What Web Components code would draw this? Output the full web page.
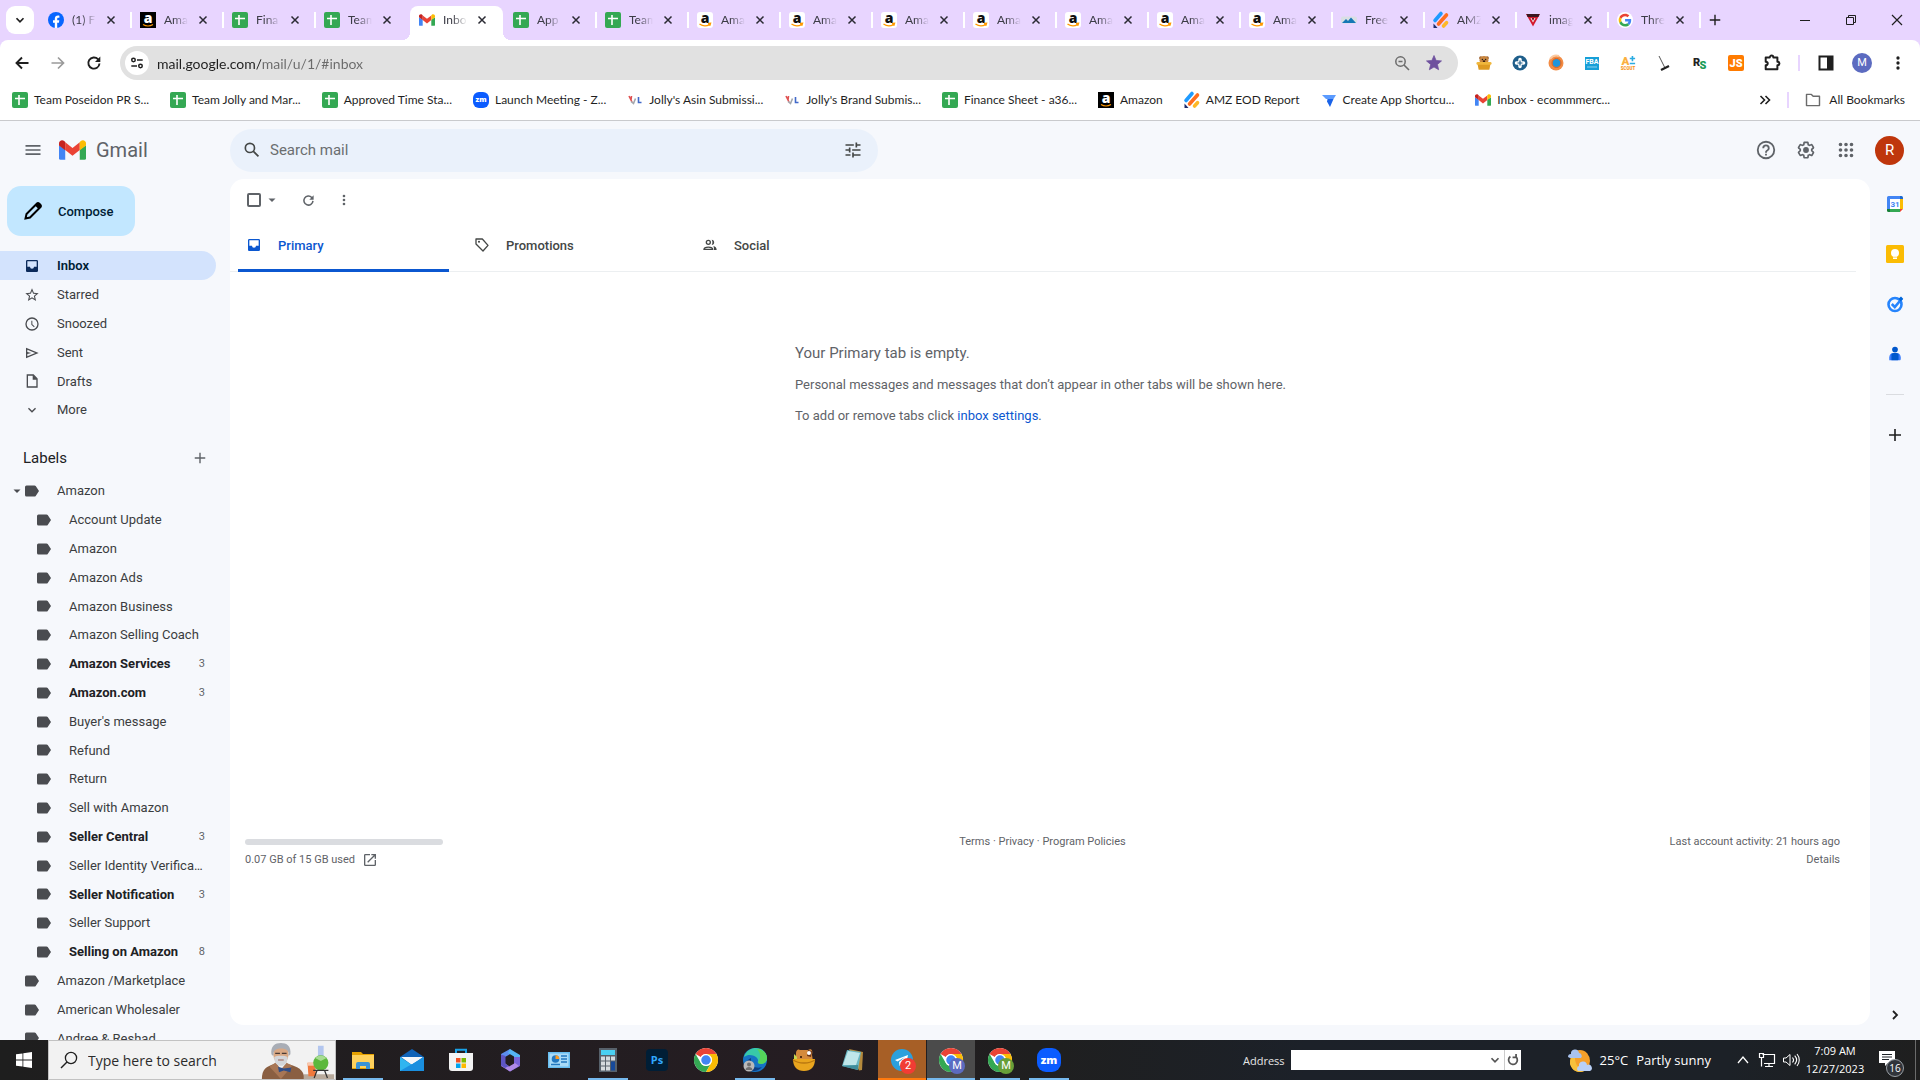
<!DOCTYPE html>
<html lang="en">
<head>
<meta charset="utf-8">
<title>Inbox - Gmail</title>
<style>
  html, body {
    margin: 0;
    height: 100%;
  }
  body {
    display: flex;
    flex-direction: column;
    overflow: hidden;
    background: #f6f8fc;
    font-family: Roboto, "Liberation Sans", sans-serif;
    font-size: 13px;
  }
</style>
</head>
<body>
<browser-tabs></browser-tabs>
<browser-toolbar></browser-toolbar>
<bookmarks-bar></bookmarks-bar>
<mail-app></mail-app>
<desktop-taskbar></desktop-taskbar>

<script>
// Icon artwork: name -> [viewBox, markup]
const SHEETS = '<rect width="16" height="16" rx="2" fill="#34a853"/><path d="M7 3v10M3 6.5h10" stroke="#fff" stroke-width="1.6"/>';
const GMAIL = '<path fill="#4285f4" d="M0 5v12.500a1.500 1.500 0 0 0 1.500 1.500H6V9z"/><path fill="#34a853" d="M26 5v12.500a1.500 1.500 0 0 1-1.500 1.500H20V9z"/><path fill="#ea4335" d="M6 2l7 5.500L20 2v7.500l-7 5.500-7-5.500z"/><path fill="#c5221f" d="M0 3c0-2.500 3-4 5-2.200L6 1.700v8L0 5.200z"/><path fill="#fbbc04" d="M26 3c0-2.500-3-4-5-2.200l-1 .9v8l6-4.500z"/>';
const SMILE = '<text x="8" y="11" text-anchor="middle" font-family="Open Sans, sans-serif" font-weight="800" font-size="14" fill="#111">a</text><path d="M2.500 12q5 3.500 10 .6M11 11.500l2.500-.2-.8 2.400" fill="none" stroke="#f90" stroke-width="1.400"/>';
const CHROME = '<circle cx="24" cy="24" r="24" fill="#fff"/><path fill="#ea4335" d="M24 0a24 24 0 0 1 20.800 12H24a12 12 0 0 0-10.400 6L3.200 12A24 24 0 0 1 24 0z"/><path fill="#34a853" d="M3.200 12A24 24 0 0 0 24 48l10.400-18A12 12 0 0 1 13.600 30z"/><path fill="#fbbc04" d="M44.800 12A24 24 0 0 1 24 48l10.400-18A12 12 0 0 0 34.400 18L24 12z"/><circle cx="24" cy="24" r="12" fill="#fff"/><circle cx="24" cy="24" r="9.500" fill="#4285f4"/>';
const AMZ = '<path d="M2 8.500L8 1.500" stroke="#1f9bff" stroke-width="3.600" stroke-linecap="round"/><path d="M5.500 12L13.500 3" stroke="#ff6d1f" stroke-width="3.600" stroke-linecap="round"/><path d="M10.500 14L13.500 10.700" stroke="#fdb827" stroke-width="3.600" stroke-linecap="round"/><path d="M.5 11.500L4.500 16H.5z" fill="#1b2a6b"/>';
const JOLLY = '<path d="M2 4l3 6M4.500 4L4 8" stroke="#e05252" stroke-width="1.600"/><path d="M4 9.500l2.500 2L8.500 6.500" fill="none" stroke="#a3a7ad" stroke-width="1.600"/><path d="M11.500 5v5.500h3" fill="none" stroke="#4169c9" stroke-width="1.600"/>';

const ICONS = {
  chevronDown: ['0 0 16 16', '<path d="M4 6l4 4 4-4" fill="none" stroke="currentColor" stroke-width="2"/>'],
  close: ['0 0 16 16', '<path d="M4 4l8 8M12 4l-8 8" stroke="currentColor" stroke-width="1.700"/>'],
  plus: ['0 0 16 16', '<path d="M8 2v12M2 8h12" stroke="currentColor" stroke-width="1.600"/>'],
  back: ['0 0 16 16', '<path d="M14.500 8H2.500M8 2.500L2.500 8 8 13.500" fill="none" stroke="currentColor" stroke-width="1.900"/>'],
  forward: ['0 0 16 16', '<path d="M1.500 8h12M8 2.500L13.500 8 8 13.500" fill="none" stroke="currentColor" stroke-width="1.700"/>'],
  reload: ['0 0 16 16', '<path d="M13.500 8.500A5.600 5.600 0 1 1 12 4.200l1 1" fill="none" stroke="currentColor" stroke-width="1.900"/><path d="M14.300 1.500V7H9z" fill="currentColor"/>'],
  minimize: ['0 0 12 12', '<path d="M1 6.500h10" stroke="currentColor"/>'],
  restore: ['0 0 12 12', '<path d="M1.500 3.500h7v7h-7zM3.500 3.500v-2h7v7h-2" fill="none" stroke="currentColor"/>'],
  winClose: ['0 0 12 12', '<path d="M1 1l10 10M11 1L1 11" stroke="currentColor" stroke-width="1.200"/>'],
  tuneSite: ['0 0 16 16', '<circle cx="4" cy="4.500" r="2" fill="none" stroke="currentColor" stroke-width="1.700"/><circle cx="12" cy="11.500" r="2" fill="none" stroke="currentColor" stroke-width="1.700"/><path d="M8 4.500h6.500M1.500 11.500H8" stroke="currentColor" stroke-width="1.800"/>'],
  zoomOut: ['0 0 16 16', '<circle cx="6.500" cy="6.500" r="4.700" fill="none" stroke="currentColor" stroke-width="1.500"/><path d="M10 10l5 5M4.500 6.500h4" stroke="currentColor" stroke-width="1.600"/>'],
  star: ['0 0 24 24', '<path d="M12 17.300l6.200 3.700-1.600-7L22 9.200l-7.200-.6L12 2 9.200 8.600 2 9.200l5.500 4.800L5.800 21z" fill="currentColor" stroke="currentColor"/>'],
  starOutline: ['0 0 24 24', '<path d="M22 9.240l-7.190-.62L12 2 9.190 8.630 2 9.240l5.460 4.730L5.820 21 12 17.270 18.180 21l-1.630-7.030L22 9.240zM12 15.400l-3.760 2.270 1-4.280-3.320-2.880 4.380-.38L12 6.100l1.710 4.040 4.380.38-3.320 2.880 1 4.280L12 15.400z" fill="currentColor"/>'],
  kebab: ['0 0 24 24', '<path d="M12 8a2 2 0 1 0 0-4 2 2 0 0 0 0 4zm0 2a2 2 0 1 0 0 4 2 2 0 0 0 0-4zm0 6a2 2 0 1 0 0 4 2 2 0 0 0 0-4z" fill="currentColor"/>'],
  puzzle: ['0 0 20 20', '<path d="M3 4h4.500c0-3 4-3 4 0H16v4.500c3 0 3 4 0 4V17H3v-4.500c3 0 3-4 0-4z" fill="none" stroke="currentColor" stroke-width="2.200" stroke-linejoin="round"/>'],
  panel: ['0 0 16 16', '<rect x="1.500" y="1.500" width="13" height="13" fill="none" stroke="currentColor" stroke-width="2"/><path d="M9 1h6v14H9z" fill="currentColor"/>'],
  more: ['0 0 12 12', '<path d="M1.500 2l4 4-4 4M6.500 2l4 4-4 4" fill="none" stroke="currentColor" stroke-width="1.600"/>'],
  folder: ['0 0 18 18', '<path d="M1.700 15.300V2.700h5.500l2 2h7.100v10.600z" fill="none" stroke="currentColor" stroke-width="1.600" stroke-linejoin="round"/>'],

  facebook: ['0 0 16 16', '<circle cx="8" cy="8" r="8" fill="#0866ff"/><path d="M6.800 16v-5.300H5V8.200h1.800V7c0-2.400 1.200-3.500 3.300-3.500.5 0 1 .1 1.300.2v2.100h-.9c-1 0-1.300.4-1.300 1.300v1.100h2.100l-.4 2.500H9.200V16z" fill="#fff"/>'],
  amazonDark: ['0 0 16 16', '<rect width="16" height="16" fill="#000"/><text x="8" y="10.500" text-anchor="middle" font-family="Open Sans, sans-serif" font-weight="800" font-size="14" fill="#fff">a</text><path d="M3 12.500q5 3 10 0" fill="none" stroke="#f90" stroke-width="1.200"/>'],
  amazon: ['0 0 16 16', '<rect width="16" height="16" rx="3" fill="#fff"/>' + SMILE],
  sheets: ['0 0 16 16', SHEETS],
  gmail: ['0 0 26 19', GMAIL],
  mountain: ['0 0 16 16', '<rect y="4.500" width="16" height="7" rx="2" fill="#d9dfe4"/><path d="M1 11l4-4 2 2 3-3.500 5 5.500z" fill="#1577b5"/>'],
  amz: ['0 0 16 16', AMZ],
  vee: ['0 0 16 16', '<path d="M1 2h14L8 14.500z" fill="#d3182c"/><path d="M1.500 2h13l-1 3h-11z" fill="#3a1720"/><path d="M5.500 6h5L8 10.500z" fill="#fff"/><path d="M6.500 6h3L8 9z" fill="#7d1220"/>'],
  google: ['0 0 48 48', '<circle cx="24" cy="24" r="24" fill="#fff"/><g transform="translate(5 5) scale(.8)"><path fill="#EA4335" d="M24 9.500c3.540 0 6.710 1.220 9.210 3.600l6.850-6.850C35.900 2.380 30.470 0 24 0 14.620 0 6.510 5.380 2.560 13.220l7.980 6.190C12.430 13.720 17.740 9.500 24 9.500z"/><path fill="#4285F4" d="M46.980 24.550c0-1.570-.15-3.090-.38-4.550H24v9.020h12.940c-.58 2.960-2.260 5.480-4.780 7.180l7.730 6c4.510-4.180 7.090-10.360 7.090-17.650z"/><path fill="#FBBC05" d="M10.530 28.590c-.48-1.450-.76-2.990-.76-4.590s.27-3.140.76-4.590l-7.980-6.190C.92 16.460 0 20.120 0 24c0 3.880.92 7.540 2.560 10.780l7.970-6.190z"/><path fill="#34A853" d="M24 48c6.480 0 11.930-2.130 15.890-5.810l-7.730-6c-2.150 1.450-4.920 2.300-8.160 2.300-6.260 0-11.570-4.220-13.470-9.910l-7.980 6.190C6.510 42.620 14.620 48 24 48z"/></g>'],
  zoom: ['0 0 24 24', '<rect width="24" height="24" rx="9" fill="#0b5cff"/><text x="12" y="15.500" text-anchor="middle" font-family="Open Sans, sans-serif" font-weight="800" font-size="11" fill="#fff">zm</text>'],
  jolly: ['0 0 16 16', JOLLY],
  shortcut: ['0 0 16 16', '<path d="M1 3h14l-2.500 4H5z" fill="#5b9bff"/><path d="M6.500 7h6L9 15 6 9.500z" fill="#1a63e8"/>'],

  extBear: ['0 0 18 18', '<circle cx="5.500" cy="3.500" r="2" fill="#9a5b26"/><circle cx="12.500" cy="3.500" r="2" fill="#9a5b26"/><circle cx="9" cy="6" r="5" fill="#c88640"/><circle cx="7.200" cy="5" r=".8" fill="#222"/><circle cx="10.800" cy="5" r=".8" fill="#222"/><ellipse cx="9" cy="7" rx="1.400" ry="1" fill="#3a220f"/><path d="M1.500 9h15l-1.500 7.500H3z" fill="#dd9a22"/><rect x="0.500" y="8" width="17" height="3" rx="1.500" fill="#f0b73c"/>'],
  extHelp: ['0 0 16 16', '<circle cx="8" cy="8" r="7.500" fill="#1f5f8b"/><path d="M8 4.500v7M4.500 8h7" stroke="#fff" stroke-width="3.500" stroke-linecap="round"/><path d="M8 5.500v5M5.500 8h5" stroke="#1f5f8b" stroke-width="1.200"/>'],
  extSwirl: ['0 0 16 16', '<circle cx="8" cy="8" r="7.500" fill="#f28c45"/><path d="M2 4a8 8 0 0 1 9-3" stroke="#fbc9a0" stroke-width="2" fill="none"/><circle cx="8.500" cy="8" r="4" fill="#1e95dc"/><circle cx="8.500" cy="8" r="4.500" fill="none" stroke="#d96220"/>'],
  extFba: ['0 0 16 16', '<rect x="1" y="2" width="14" height="13" fill="#169fd8"/><text x="8" y="9" text-anchor="middle" font-family="Roboto" font-weight="700" font-size="7" fill="#fff">FBA</text><path d="M3 12h10" stroke="#8bd2ef"/>'],
  extScout: ['0 0 18 18', '<text x="6" y="11" text-anchor="middle" font-family="Roboto" font-weight="900" font-size="13" fill="#fbb040">A</text><path d="M14 1v6M11 4h6M11 9.500h6" stroke="#29abe2" stroke-width="1.800"/><text x="9" y="17" text-anchor="middle" font-family="Roboto" font-weight="900" font-size="5" fill="#f7941d">SCOUT</text>'],
  extBroom: ['0 0 16 16', '<path d="M3 1l6 12" stroke="#555"/><path d="M5 15l8-4" stroke="#222" stroke-width="2.200"/>'],
  extRs: ['0 0 16 16', '<text x="1" y="11" font-family="Roboto" font-weight="900" font-size="11" fill="#222">R</text><text x="7.500" y="13.500" font-family="Roboto" font-weight="900" font-size="11" fill="#159a55">S</text>'],
  extJs: ['0 0 16 16', '<rect width="16" height="16" rx="2" fill="#ff7b00"/><text x="8" y="12.200" text-anchor="middle" font-family="Roboto" font-weight="900" font-size="11" fill="#fff">JS</text>'],

  menu: ['0 0 24 24', '<path d="M3 18h18v-2H3v2zm0-5h18v-2H3v2zm0-7v2h18V6H3z" fill="currentColor"/>'],
  search: ['0 0 24 24', '<path d="M20.490 19l-5.730-5.730C15.530 12.200 16 10.910 16 9.500A6.500 6.500 0 1 0 9.500 16c1.410 0 2.700-.47 3.770-1.240L19 20.490 20.490 19zM5 9.500a4.500 4.500 0 1 1 9 0 4.500 4.500 0 0 1-9 0z" fill="currentColor"/>'],
  tune: ['0 0 24 24', '<path d="M3 17v2h6v-2H3zM3 5v2h10V5H3zm10 16v-2h8v-2h-8v-2h-2v6h2zM7 9v2H3v2h4v2h2V9H7zm14 4v-2H11v2h10zm-6-4h2V7h4V5h-4V3h-2v6z" fill="currentColor"/>'],
  help: ['0 0 24 24', '<path d="M11 18h2v-2h-2v2zm1-16a10 10 0 1 0 0 20 10 10 0 0 0 0-20zm0 18a8 8 0 1 1 0-16 8 8 0 0 1 0 16zm0-14a4 4 0 0 0-4 4h2a2 2 0 1 1 4 0c0 2-3 1.750-3 5h2c0-2.250 3-2.500 3-5a4 4 0 0 0-4-4z" fill="currentColor"/>'],
  gear: ['0 0 24 24', '<path d="M13.850 22.250h-3.700c-.74 0-1.360-.54-1.450-1.270l-.27-1.890c-.27-.14-.53-.29-.79-.46l-1.800.72c-.7.260-1.470-.03-1.810-.65L2.200 15.530c-.35-.66-.2-1.440.36-1.880l1.530-1.190c-.01-.15-.02-.3-.02-.46 0-.15.01-.31.02-.46l-1.520-1.190c-.59-.45-.74-1.260-.37-1.880l1.850-3.190c.34-.62 1.110-.9 1.790-.63l1.810.73c.26-.17.52-.32.78-.46l.27-1.910c.09-.7.710-1.250 1.440-1.250h3.700c.74 0 1.360.54 1.450 1.270l.27 1.890c.27.14.53.29.79.46l1.800-.72c.71-.26 1.480.03 1.820.65l1.840 3.180c.36.66.2 1.440-.36 1.880l-1.520 1.190c.01.150.02.300.02.460s-.01.310-.02.460l1.520 1.190c.56.450.72 1.230.37 1.860l-1.860 3.220c-.34.620-1.110.9-1.800.63l-1.800-.72c-.26.170-.52.320-.78.460l-.27 1.910c-.1.680-.72 1.220-1.460 1.220zm-3.230-2h2.760l.37-2.550.53-.22c.44-.18.88-.44 1.340-.78l.45-.34 2.380.96 1.380-2.400-2.030-1.580.07-.56c.03-.26.06-.51.06-.78s-.03-.53-.06-.78l-.07-.56 2.030-1.580-1.390-2.400-2.390.96-.45-.35c-.42-.32-.87-.58-1.330-.77l-.52-.22-.37-2.550h-2.760l-.37 2.550-.53.210c-.44.190-.88.440-1.340.790l-.45.330-2.380-.95-1.390 2.390 2.030 1.580-.07.560a7 7 0 0 0-.06.790c0 .26.020.53.060.78l.07.56-2.030 1.580 1.380 2.400 2.390-.96.45.350c.43.330.86.580 1.330.77l.53.220.38 2.550z" fill="currentColor"/><circle cx="12" cy="12" r="3.500" fill="currentColor"/>'],
  apps: ['0 0 24 24', '<path d="M6 8a2 2 0 1 0 0-4 2 2 0 0 0 0 4zm6 12a2 2 0 1 0 0-4 2 2 0 0 0 0 4zm-6 0a2 2 0 1 0 0-4 2 2 0 0 0 0 4zm0-6a2 2 0 1 0 0-4 2 2 0 0 0 0 4zm6 0a2 2 0 1 0 0-4 2 2 0 0 0 0 4zm4-8a2 2 0 1 0 4 0 2 2 0 0 0-4 0zm-4 2a2 2 0 1 0 0-4 2 2 0 0 0 0 4zm6 6a2 2 0 1 0 0-4 2 2 0 0 0 0 4zm0 6a2 2 0 1 0 0-4 2 2 0 0 0 0 4z" fill="currentColor"/>'],
  pencil: ['0 0 18 18', '<path d="M1.500 16.500l1-4.500L13 1.500a1.400 1.400 0 0 1 2 0l1.500 1.500a1.400 1.400 0 0 1 0 2L6 15.500z" fill="none" stroke="#000" stroke-width="2"/><path d="M11 3.500L13.500 1h2L17 2.500v2L14.500 7z" fill="#000"/><path d="M1 17v-3l3 3z" fill="#000"/>'],
  inbox: ['0 0 24 24', '<path d="M19 3H5a2 2 0 0 0-2 2v14c0 1.100.9 2 2 2h14a2 2 0 0 0 2-2V5a2 2 0 0 0-2-2zm0 10h-4a3 3 0 0 1-6 0H5V5h14v8z" fill="currentColor"/>'],
  clock: ['0 0 24 24', '<path d="M12 2a10 10 0 1 0 0 20 10 10 0 0 0 0-20zm0 18a8 8 0 1 1 0-16 8 8 0 0 1 0 16zm.5-13H11v6l4 4 1-1.200-3.500-3.500z" fill="currentColor"/>'],
  send: ['0 0 24 24', '<path d="M3 20V4l19 8-19 8zm2-3l11.850-5L5 7v3.500l6 1.500-6 1.500V17z" fill="currentColor"/>'],
  draft: ['0 0 24 24', '<path d="M5 3h9l5.500 5.500V21H5z" fill="none" stroke="currentColor" stroke-width="2"/><path d="M13 2.500V10h7z" fill="currentColor"/>'],
  expand: ['0 0 24 24', '<path d="M7.400 8.600L12 13.200l4.600-4.600L18 10l-6 6-6-6z" fill="currentColor"/>'],
  label: ['0 0 16 16', '<path d="M2.500 2.500h8a1.500 1.500 0 0 1 1.200.6L15 8l-3.300 4.900a1.500 1.500 0 0 1-1.200.6h-8A1.500 1.500 0 0 1 1 12V4a1.500 1.500 0 0 1 1.500-1.500z" fill="currentColor"/>'],
  caret: ['0 0 8 8', '<path d="M.5 2.500h7L4 6z" fill="currentColor"/>'],
  tag: ['0 0 24 24', '<path d="M3 3h9.500l8.500 9.500-7.500 8.500L3 10.500z" fill="none" stroke="currentColor" stroke-width="2" stroke-linejoin="round"/><circle cx="7.500" cy="7.200" r="1.600" fill="currentColor"/>'],
  people: ['0 0 24 24', '<circle cx="9.500" cy="8" r="3" fill="none" stroke="currentColor" stroke-width="2"/><path d="M3 18.500c0-4.500 13-4.500 13 0z" fill="none" stroke="currentColor" stroke-width="2"/><path d="M14.500 4c5 0 5 8 0 8 1.500-2.500 1.500-5.500 0-8zM17 13.500c3 .8 5 2.500 5 6h-4c0-3-.2-4.500-1-6z" fill="currentColor"/>'],
  openNew: ['0 0 24 24', '<path d="M19 19H5V5h7V3H5a2 2 0 0 0-2 2v14a2 2 0 0 0 2 2h14a2 2 0 0 0 2-2v-7h-2v7zM14 3v2h3.600l-9.800 9.800 1.400 1.400L19 6.400V10h2V3h-7z" fill="currentColor"/>'],
  calendar: ['0 0 18 18', '<rect x="1" y="1" width="16" height="16" rx="1.500" fill="#fff"/><path d="M1 14V2.500A1.500 1.500 0 0 1 2.500 1H14v3H4v10z" fill="#4285f4"/><path d="M14 1h1.500A1.500 1.500 0 0 1 17 2.500V4h-3z" fill="#1967d2"/><path d="M14 4h3v10h-3z" fill="#fbbc04"/><path d="M4 14h10v3H4z" fill="#34a853"/><path d="M1 14h3v3H2.500A1.500 1.500 0 0 1 1 15.500z" fill="#188038"/><path d="M14 14h3l-3 3z" fill="#ea4335"/><text x="9" y="12" text-anchor="middle" font-family="Roboto" font-weight="700" font-size="8" fill="#4285f4">31</text>'],
  keep: ['0 0 18 18', '<rect width="18" height="18" rx="1.500" fill="#fbbc04"/><circle cx="9" cy="8" r="4" fill="#fff"/><path d="M7 10.500h4V14H7z" fill="#fff"/><path d="M7 12.200h4" stroke="#fbbc04" stroke-width=".6"/>'],
  tasks: ['0 0 18 18', '<circle cx="9" cy="9.500" r="6.500" fill="none" stroke="#2684fc" stroke-width="2.600"/><path d="M5.800 9l3 3L16 3.500" fill="none" stroke="#2684fc" stroke-width="2.600"/><path d="M12.500 3.800L15 1.500l2.200 2.300-2.500 2.700z" fill="#0066da"/>'],
  contacts: ['0 0 18 18', '<circle cx="9" cy="4" r="3.200" fill="#0057cc"/><path d="M2.500 16v-3c0-3 2-5 4.500-5h4c2.500 0 4.500 2 4.500 5v1.500c0 1-.6 1.500-1.500 1.500z" fill="#3c7dfc"/><path d="M5 16V9c1-.8 2-1 4-1s3 .2 4 1v6c0 .6-.4 1-1 1z" fill="#0057cc"/>'],
  chevronRight: ['0 0 16 16', '<path d="M6 4l4 4-4 4" fill="none" stroke="currentColor" stroke-width="1.800"/>'],

  windows: ['0 0 16 16', '<path d="M0 2.300L6.500 1.400v6.200H0zM7.300 1.300L16 0v7.600H7.300zM0 8.400h6.500v6.200L0 13.700zM7.300 8.400H16V16l-8.700-1.300z" fill="#fff"/>'],
  lens: ['0 0 18 18', '<circle cx="11" cy="7" r="5.600" fill="none" stroke="currentColor" stroke-width="1.300"/><path d="M7 11l-6 6" stroke="currentColor" stroke-width="1.400"/>'],
  scientist: ['0 0 76 40', '<path d="M0 40c0-10 4-13 14-16h12c12 3 18 6 19 16z" fill="#8a5f42"/><path d="M8 27l12 13 12-14-6-3H14z" fill="#a87655"/><path d="M15 23l5 7 6-7z" fill="#eef0f4"/><path d="M17 27l6 2 8-1-1 5-7-2-5 2z" fill="#2f4d88"/><ellipse cx="20" cy="14" rx="8" ry="11" fill="#d9a884"/><path d="M10 14C9 5 14 2 20 2s11 3 10 12l-2 2c1-6-2-8-8-8s-8 2-8 8z" fill="#a9adb5"/><path d="M13 17c2-2 12-2 14 0 0 6-3 9-7 9s-7-3-7-9z" fill="#d4d6da"/><path d="M17 20h6" stroke="#9b5a4a"/><path d="M14 13h5M21 13h5" stroke="#4a3b35" stroke-width="1.500"/><path d="M44 35h32v5H44z" fill="#b8aa9c"/><path d="M48 23h8l1 14h-8z" fill="#f0783c"/><path d="M48 23h8v3h-8z" fill="#f7c9b0"/><path d="M59 5h6v12h-6z" fill="#b3c6ee"/><circle cx="62" cy="23" r="8" fill="#5cb83c"/><path d="M56 18a8 8 0 0 1 12 0l-6 3z" fill="#a8dc92"/><path d="M54 31h16M58 31l-3 8M66 31l3 8" stroke="#333" stroke-width="1.300"/>'],
  explorer: ['0 0 24 24', '<path d="M1 4h9l2 2h11v15H1z" fill="#e6a100"/><path d="M1 7h22v13H1z" fill="#ffd15c"/><path d="M5 21v-5a2 2 0 0 1 2-2h10a2 2 0 0 1 2 2v5h-4v-3H9v3z" fill="#3a93d6"/>'],
  mail: ['0 0 24 24', '<path d="M0 9L12 1l12 8v14H0z" fill="#0f63b8"/><path d="M1 9h22L12 17z" fill="#f4f7fa"/><path d="M0 9l12 8L24 9v14H0z" fill="#2fb5f0"/><path d="M0 23L24 9v14z" fill="#1a8fdf"/><path d="M3 9h18l-9 7z" fill="#f4f7fa"/>'],
  store: ['0 0 24 24', '<path d="M7 6V1.700h10V6" fill="none" stroke="#1aa2e8" stroke-width="2"/><path d="M0 5h24v15a3 3 0 0 1-3 3H3a3 3 0 0 1-3-3z" fill="#f3f3f3"/><path fill="#f25022" d="M7 10h4.500v4.500H7z"/><path fill="#7fba00" d="M12.500 10H17v4.500h-4.500z"/><path fill="#00a4ef" d="M7 15.500h4.500V20H7z"/><path fill="#ffb900" d="M12.500 15.500H17V20h-4.500z"/>'],
  office: ['0 0 24 24', '<path d="M12 1L3 6v9l4 2.500V9l7-4z" fill="#5b8def"/><path d="M12 1l10 6v8l-6-2V8.500L10 5z" fill="#55b4f5"/><path d="M22 9v9l-10 5.500-3-2 7-4V9z" fill="#7a63d8"/><path d="M3 12v6l9 5.500L21 18l-4-3-6 3.500z" fill="#b08ae6"/><path d="M3 6.500v11l4 2.500 4-2-3.500-2V8z" fill="#5d55c4"/>'],
  control: ['0 0 24 24', '<rect x="1" y="4" width="22" height="16" fill="#67bdf0"/><rect x="2.500" y="5.500" width="19" height="13" fill="#a9dbf8"/><circle cx="8.500" cy="11" r="3.800" fill="#2278c0"/><path d="M8.500 11V7.200a3.800 3.800 0 0 1 3.800 3.800z" fill="#ff9a1f"/><path d="M14 8h6M14 11h6M14 14h6M4 16.500h9" stroke="#2278c0" stroke-width="1.500"/>'],
  calculator: ['0 0 24 24', '<rect x="3" width="18" height="24" fill="#57616b"/><rect x="5" y="2" width="14" height="5" fill="#4ad0f2"/><path d="M5 8.500h4v4H5zM10 8.500h4v4h-4zM15 8.500h4v4h-4zM5 13.500h4v4H5zM10 13.500h4v4h-4zM5 18.500h4v4H5zM10 18.500h4v4h-4z" fill="#d5dade"/><path d="M15 13.500h4v9h-4z" fill="#174a9b"/>'],
  photoshop: ['0 0 24 24', '<rect x="1" y="1" width="22" height="22" rx="4" fill="#001e36"/><text x="12" y="16" text-anchor="middle" font-family="Open Sans, sans-serif" font-weight="700" font-size="11" fill="#31a8ff">Ps</text>'],
  chrome: ['0 0 48 48', CHROME],
  edge: ['0 0 24 24', '<circle cx="12" cy="12" r="12" fill="#1673c4"/><path d="M1 9C3 2 9 0 13 0c7 0 11 5 11 10 0 4-3 6-6 6-2 0-4-1-3-3 1-4-8-9-14-4z" fill="#38c9a8"/><path d="M14 1c6 0 10 5 10 9 0 4-3 6-6 6-2 0-3-1-3-2 3-4 3-9-1-13z" fill="#55d65a"/><path d="M8 13c0 5 5 8 11 6-4 5-10 5-14 2-3-4-2-9 3-11z" fill="#0d3e82"/><circle cx="6" cy="18" r="5.500" fill="#b9b9b9"/><circle cx="6" cy="16.500" r="2" fill="#6f6f6f"/><path d="M2.500 22c0-4 7-4 7 0z" fill="#6f6f6f"/>'],
  capybara: ['0 0 24 24', '<path d="M4 6c0-5 3-5 4-4h8c4-2 5 1 4 5l1 6H3z" fill="#d48a3c"/><path d="M2 6l3 3v5H2z" fill="#c6d84e"/><path d="M16 2l4 1-1 6-4-1z" fill="#6b3518"/><circle cx="17" cy="5" r="2" fill="#fff"/><circle cx="9" cy="9" r="1" fill="#2b1708"/><path d="M1 11h22c0 8-4 12-11 12S1 19 1 11z" fill="#e9a51e"/><path d="M1 12c6 4 16 4 22 0" stroke="#b87710" fill="none" stroke-width="1.500"/>'],
  notepad: ['0 0 24 24', '<path d="M8 1l14 3-1 18-3 .5z" fill="#b58a3c"/><path d="M6 2l14 2-3 18L1 18z" fill="#69b7c4"/><path d="M7 3l12 2-4 12L2 17z" fill="#bfe6ea"/><path d="M1 18l16-1v5z" fill="#3f8d9c"/>'],
  telegram: ['0 0 24 24', '<circle cx="12" cy="12" r="11" fill="#2ba0dc"/><path d="M5 12l13-5-2.500 12-4-3-2 2-.5-4 6-5-7.500 4.500z" fill="#fff"/>'],
  weather: ['0 0 24 24', '<ellipse cx="12" cy="13" rx="10" ry="11" fill="#f5a02a"/><path d="M2 16a10 11 0 0 0 14 7c-6-2-10-8-9-17a11 11 0 0 0-5 10z" fill="#f7c13c"/><path d="M0 9a3 3 0 0 1 3-3 4 4 0 0 1 8-1 3 3 0 0 1 2 5H2z" fill="#a9c3ee"/><path d="M10 23a3 3 0 0 1 1-5 4 4 0 0 1 8-1 3 3 0 0 1 3 6z" fill="#b9d0f6"/>'],
  chevronUp: ['0 0 16 16', '<path d="M3 11l5-6 5 6" fill="none" stroke="currentColor" stroke-width="1.300"/>'],
  network: ['0 0 18 18', '<path d="M4.500 3.500h12v9H6M11 12.500v3M7 15.500h8" fill="none" stroke="currentColor" stroke-width="1.200"/><path d="M1.500 2.500h4v4h-4zM3.500 6.500v9" fill="none" stroke="currentColor" stroke-width="1.200"/>'],
  volume: ['0 0 18 18', '<path d="M1.500 7h2.500L8 3.500v11L4 11H1.500z" fill="none" stroke="currentColor"/><path d="M10.500 6.500c1.300 1.500 1.300 3.500 0 5M12.700 4.700c2.300 2.500 2.300 6 0 8.600M15 3c3 3.500 3 8.500 0 12" fill="none" stroke="currentColor" stroke-width="1.100"/>'],
  note: ['0 0 16 16', '<path d="M0 0h16v12H9l-3 3v-3H0z" fill="#fff"/><path d="M3 3.500h10M3 6h10M3 8.500h7" stroke="#1c2126"/>'],
  refreshSmall: ['0 0 16 16', '<path d="M11.500 4.500A5 5 0 1 1 5 4M11.500 1v4h-4" fill="none" stroke="currentColor" stroke-width="2"/>']
};

class UiIcon extends HTMLElement {
  connectedCallback() {
    const [box, art] = ICONS[this.getAttribute('name')];
    const size = this.getAttribute('size') || 16;
    const width = this.getAttribute('width') || size;
    this.attachShadow({ mode: 'open' });
    this.shadowRoot.innerHTML = `
      <style>
        :host { display: inline-flex; flex: none; }
        svg { display: block; overflow: visible; }
      </style>
      <svg viewBox="${box}" width="${width}" height="${size}" aria-hidden="true">${art}</svg>
    `;
  }
}
customElements.define('ui-icon', UiIcon);

// Shared reset for the controls inside each shadow root
const RESET = `
  :host, * { box-sizing: border-box; }
  button, input, select { font: inherit; color: inherit; margin: 0; }
  button {
    display: inline-flex;
    align-items: center;
    justify-content: center;
    padding: 0;
    border: 0;
    background: none;
  }
  a { color: inherit; text-decoration: none; }
`;

class BrowserTab extends HTMLElement {
  connectedCallback() {
    this.attachShadow({ mode: 'open' });
    this.shadowRoot.innerHTML = `
      <style>
        ${RESET}
        :host {
          flex: 1;
          display: flex;
          align-items: center;
          position: relative;
          min-width: 0;
          height: 28px;
          padding-left: 8px;
          font-size: 12px;
          color: #3c3c46;
        }
        .title {
          width: 24px;
          height: 16px;
          line-height: 16px;
          margin: 0 8px;
          overflow: hidden;
          white-space: nowrap;
          -webkit-mask-image: linear-gradient(90deg, #000 40%, transparent);
          mask-image: linear-gradient(90deg, #000 40%, transparent);
        }
        button { width: 14px; color: #2a2a33; }
        :host::after {
          content: "";
          position: absolute;
          right: 0;
          top: 6px;
          width: 2px;
          height: 16px;
          background: #fff;
        }
        :host([plain])::after { display: none; }
        :host([active]) {
          height: 34px;
          padding: 0 0 6px 9px;
          margin: 6px 2px 0;
          background: #fff;
          border-radius: 8px 8px 0 0;
        }
        :host([active])::before, :host([active])::after {
          content: "";
          display: block;
          position: absolute;
          top: auto;
          bottom: 0;
          width: 8px;
          height: 8px;
          background: radial-gradient(circle at 0 0, transparent 8px, #fff 8px);
        }
        :host([active])::before { left: -8px; }
        :host([active])::after {
          right: -8px;
          background: radial-gradient(circle at 100% 0, transparent 8px, #fff 8px);
        }
      </style>
      <ui-icon name="${this.getAttribute('icon')}"></ui-icon>
      <span class="title"><slot></slot></span>
      <button aria-label="Close tab"><ui-icon name="close" size="14"></ui-icon></button>
    `;
  }
}
customElements.define('browser-tab', BrowserTab);

class BrowserTabs extends HTMLElement {
  connectedCallback() {
    const tabs = [
      ['facebook', '(1) F'], ['amazonDark', 'Ama'], ['sheets', 'Fina'], ['sheets', 'Team', 'plain'],
      ['gmail', 'Inbo', 'active'], ['sheets', 'App'], ['sheets', 'Team'],
      ['amazon', 'Ama'], ['amazon', 'Ama'], ['amazon', 'Ama'], ['amazon', 'Ama'],
      ['amazon', 'Ama'], ['amazon', 'Ama'], ['amazon', 'Ama'],
      ['mountain', 'Free'], ['amz', 'AMZ'], ['vee', 'imag'], ['google', 'Thre']
    ];
    this.attachShadow({ mode: 'open' });
    this.shadowRoot.innerHTML = `
      <style>
        ${RESET}
        :host {
          display: flex;
          align-items: center;
          flex: none;
          height: 40px;
          background: #e8d5ff;
          color: #1f1f1f;
          font-family: Lato, "Open Sans", sans-serif;
        }
        .list {
          width: 28px;
          height: 28px;
          margin: 0 6px;
          border-radius: 9px;
          background: #fff;
        }
        .tabs { flex: 1; display: flex; align-items: center; min-width: 0; }
        .new { width: 28px; margin-right: 53px; }
        .win { width: 46px; height: 40px; }
      </style>
      <button class="list" aria-label="Search tabs"><ui-icon name="chevronDown" size="14"></ui-icon></button>
      <div class="tabs">
        ${tabs.map(([icon, title, flag = '']) => `<browser-tab icon="${icon}" ${flag}>${title}</browser-tab>`).join('')}
      </div>
      <button class="new" aria-label="New tab"><ui-icon name="plus" size="14"></ui-icon></button>
      <button class="win" aria-label="Minimize"><ui-icon name="minimize" size="12"></ui-icon></button>
      <button class="win" aria-label="Restore"><ui-icon name="restore" size="12"></ui-icon></button>
      <button class="win" aria-label="Close"><ui-icon name="winClose" size="12"></ui-icon></button>
    `;
  }
}
customElements.define('browser-tabs', BrowserTabs);

class BrowserToolbar extends HTMLElement {
  connectedCallback() {
    const extensions = ['extBear', 'extHelp', 'extSwirl', 'extFba', 'extScout', 'extBroom', 'extRs', 'extJs'];
    this.attachShadow({ mode: 'open' });
    this.shadowRoot.innerHTML = `
      <style>
        ${RESET}
        :host {
          display: block;
          flex: none;
          background: #e8d5ff;
          font-family: Lato, "Open Sans", sans-serif;
          color: #1f1f1f;
        }
        .bar {
          display: flex;
          align-items: center;
          height: 46px;
          padding: 0 4px;
          background: #fff;
          border-radius: 8px 8px 0 0;
        }
        .bar > button { width: 36px; height: 36px; }
        .forward { color: #9a9a9a; }
        .omnibox {
          flex: 1;
          display: flex;
          align-items: center;
          height: 34px;
          margin: 0 8px;
          padding: 0 8px 0 5px;
          border-radius: 17px;
          background: #e1e1e1;
        }
        .site { width: 24px; height: 24px; border-radius: 50%; background: #fff; }
        .omnibox input {
          flex: 1;
          min-width: 0;
          padding: 0;
          margin-left: 8px;
          border: 0;
          outline: 0;
          font-size: 14px;
          background: linear-gradient(90deg, #1f1f1f 104px, #6a6a6a 104px);
          -webkit-background-clip: text;
          background-clip: text;
          -webkit-text-fill-color: transparent;
        }
        .omnibox button { width: 32px; }
        .omnibox .site { width: 24px; }
        .zoom { color: #6b6b6b; }
        .bookmark { color: #6f519e; }
        .divider { width: 2px; height: 16px; margin: 0 8px; background: #e8d5ff; }
        .avatar span {
          width: 20px;
          height: 20px;
          border-radius: 50%;
          background: #5c6bc0;
          color: #fff;
          font: 11px/20px Roboto, sans-serif;
        }
      </style>
      <div class="bar">
        <button aria-label="Back"><ui-icon name="back"></ui-icon></button>
        <button class="forward" aria-label="Forward"><ui-icon name="forward"></ui-icon></button>
        <button aria-label="Reload"><ui-icon name="reload"></ui-icon></button>
        <div class="omnibox">
          <button class="site" aria-label="Site information"><ui-icon name="tuneSite" size="14"></ui-icon></button>
          <input type="text" aria-label="Address" value="mail.google.com/mail/u/1/#inbox">
          <button class="zoom" aria-label="Zoom"><ui-icon name="zoomOut"></ui-icon></button>
          <button class="bookmark" aria-label="Edit bookmark"><ui-icon name="star" size="18"></ui-icon></button>
        </div>
        ${extensions.map(name => `<button aria-label="Extension"><ui-icon name="${name}"></ui-icon></button>`).join('')}
        <button aria-label="Extensions"><ui-icon name="puzzle" size="18"></ui-icon></button>
        <span class="divider"></span>
        <button aria-label="Side panel"><ui-icon name="panel"></ui-icon></button>
        <button class="avatar" aria-label="Profile"><span>M</span></button>
        <button aria-label="Menu"><ui-icon name="kebab" size="20"></ui-icon></button>
      </div>
    `;
  }
}
customElements.define('browser-toolbar', BrowserToolbar);

class BookmarksBar extends HTMLElement {
  connectedCallback() {
    const bookmarks = [
      ['sheets', 'Team Poseidon PR S...'], ['sheets', 'Team Jolly and Mar...'], ['sheets', 'Approved Time Sta...'],
      ['zoom', 'Launch Meeting - Z...'], ['jolly', 'Jolly\'s Asin Submissi...'], ['jolly', 'Jolly\'s Brand Submis...'],
      ['sheets', 'Finance Sheet - a36...'], ['amazonDark', 'Amazon'], ['amz', 'AMZ EOD Report'],
      ['shortcut', 'Create App Shortcu...'], ['gmail', 'Inbox - ecommmerc...']
    ];
    this.attachShadow({ mode: 'open' });
    this.shadowRoot.innerHTML = `
      <style>
        ${RESET}
        :host {
          display: flex;
          align-items: center;
          flex: none;
          height: 35px;
          padding: 0 15px 6px 12px;
          background: #fff;
          border-bottom: 1px solid #c9cacd;
          font-family: Lato, "Open Sans", sans-serif;
          font-size: 12px;
          line-height: 16px;
          color: #1f1f1f;
        }
        nav { flex: 1; display: flex; gap: 21px; min-width: 0; }
        a { display: flex; align-items: center; gap: 6px; white-space: nowrap; }
        .divider { width: 2px; height: 16px; margin: 0 16px; background: #e8d5ff; }
        .all { gap: 8px; }
        .all ui-icon { color: #6b6b6b; }
      </style>
      <nav>
        ${bookmarks.map(([icon, text]) => `<a href="#"><ui-icon name="${icon}"></ui-icon>${text}</a>`).join('')}
      </nav>
      <button aria-label="More bookmarks"><ui-icon name="more" size="12"></ui-icon></button>
      <span class="divider"></span>
      <button class="all"><ui-icon name="folder"></ui-icon>All Bookmarks</button>
    `;
  }
}
customElements.define('bookmarks-bar', BookmarksBar);

class MailHeader extends HTMLElement {
  connectedCallback() {
    this.attachShadow({ mode: 'open' });
    this.shadowRoot.innerHTML = `
      <style>
        ${RESET}
        :host {
          display: flex;
          align-items: center;
          flex: none;
          height: 58px;
          padding-right: 16px;
          color: #5f6368;
        }
        .brand {
          display: flex;
          align-items: center;
          width: 230px;
          padding-left: 23px;
        }
        .logo { display: flex; align-items: center; gap: 10px; margin-left: 16px; font-size: 20px; }
        form {
          display: flex;
          align-items: center;
          flex: 0 1 648px;
          height: 43px;
          padding: 0 8px 0 12px;
          border-radius: 22px;
          background: #eaf1fb;
          color: #444746;
        }
        input {
          flex: 1;
          min-width: 0;
          margin-left: 8px;
          padding: 0;
          border: 0;
          outline: 0;
          background: none;
          font-size: 15px;
        }
        input::placeholder { color: #6b6e70; opacity: 1; }
        form button { width: 20px; }
        form .options { width: 34px; }
        .actions { display: flex; align-items: center; margin-left: auto; }
        .actions button { width: 40px; height: 40px; }
        .actions .avatar {
          width: 29px;
          height: 29px;
          margin-left: 9px;
          border-radius: 50%;
          background: #bf360c;
          color: #fff;
          font-size: 15px;
        }
      </style>
      <div class="brand">
        <button aria-label="Main menu"><ui-icon name="menu" size="20"></ui-icon></button>
        <a class="logo" href="#"><ui-icon name="gmail" width="27" size="20"></ui-icon>Gmail</a>
      </div>
      <form role="search">
        <button type="button" aria-label="Search"><ui-icon name="search" size="20"></ui-icon></button>
        <input type="text" aria-label="Search mail" placeholder="Search mail">
        <button type="button" class="options" aria-label="Search options"><ui-icon name="tune" size="20"></ui-icon></button>
      </form>
      <div class="actions">
        <button aria-label="Support"><ui-icon name="help" size="22"></ui-icon></button>
        <button aria-label="Settings"><ui-icon name="gear" size="20"></ui-icon></button>
        <button aria-label="Google apps"><ui-icon name="apps" size="22"></ui-icon></button>
        <button class="avatar" aria-label="Account">R</button>
      </div>
    `;
  }
}
customElements.define('mail-header', MailHeader);

class NavItem extends HTMLElement {
  connectedCallback() {
    const count = this.getAttribute('count');
    this.attachShadow({ mode: 'open' });
    this.shadowRoot.innerHTML = `
      <style>
        ${RESET}
        :host {
          display: block;
          flex: none;
          height: 29px;
          margin-right: 14px;
          color: #3b3d40;
        }
        :host(:nth-child(5n)) { height: 28px; }
        a {
          display: flex;
          align-items: center;
          height: 100%;
          padding: 0 11px 0 24px;
          position: relative;
        }
        ui-icon { color: #4a4c50; }
        .text {
          flex: 1;
          margin-left: 17px;
          min-width: 0;
          overflow: hidden;
          text-overflow: ellipsis;
          white-space: nowrap;
        }
        .count { font-size: 11px; color: #5f6368; }
        .caret { position: absolute; left: 13px; }
        :host([sub]) a { padding-left: 36px; }
        :host([count]) .text { font-weight: 700; color: #202124; }
        :host([active]) {
          border-radius: 0 15px 15px 0;
          background: #d3e3fd;
          color: #001d35;
          font-weight: 600;
        }
        :host([active]) ui-icon { color: #0b2a5b; }
      </style>
      <a href="#">
        ${this.hasAttribute('open') ? '<ui-icon class="caret" name="caret" size="8"></ui-icon>' : ''}
        <ui-icon name="${this.getAttribute('icon') || 'label'}"></ui-icon>
        <span class="text"><slot></slot></span>
        ${count ? `<span class="count">${count}</span>` : ''}
      </a>
    `;
  }
}
customElements.define('nav-item', NavItem);

class MailSidebar extends HTMLElement {
  connectedCallback() {
    const folders = [
      ['inbox', 'Inbox', 'active'], ['starOutline', 'Starred'], ['clock', 'Snoozed'],
      ['send', 'Sent'], ['draft', 'Drafts'], ['expand', 'More']
    ];
    const labels = [
      ['Amazon', 'open'], ['Account Update', 'sub'], ['Amazon', 'sub'], ['Amazon Ads', 'sub'],
      ['Amazon Business', 'sub'], ['Amazon Selling Coach', 'sub'],
      ['Amazon Services', 'sub count="3"'], ['Amazon.com', 'sub count="3"'],
      ['Buyer\'s message', 'sub'], ['Refund', 'sub'], ['Return', 'sub'], ['Sell with Amazon', 'sub'],
      ['Seller Central', 'sub count="3"'], ['Seller Identity Verification', 'sub'],
      ['Seller Notification', 'sub count="3"'], ['Seller Support', 'sub'],
      ['Selling on Amazon', 'sub count="8"'], ['Amazon /Marketplace', ''],
      ['American Wholesaler', ''], ['Andree &amp; Reshad', '']
    ];
    this.attachShadow({ mode: 'open' });
    this.shadowRoot.innerHTML = `
      <style>
        ${RESET}
        :host {
          display: flex;
          flex-direction: column;
          flex: none;
          width: 230px;
          min-height: 0;
          overflow: hidden;
        }
        .compose {
          align-self: flex-start;
          flex: none;
          gap: 16px;
          height: 50px;
          margin: 7px 0 15px 7px;
          padding: 0 21px 0 17px;
          border-radius: 14px;
          background: #c2e7ff;
          color: #001d35;
          font-weight: 500;
        }
        nav { display: flex; flex-direction: column; flex: none; }
        .heading {
          display: flex;
          align-items: center;
          justify-content: space-between;
          flex: none;
          height: 36px;
          margin-top: 16px;
          padding: 0 23px 0 23px;
          color: #202124;
        }
        h3 { margin: 0; font-size: 15px; font-weight: 400; }
        .heading button { color: #5f6368; }
      </style>
      <button class="compose"><ui-icon name="pencil" size="18"></ui-icon>Compose</button>
      <nav aria-label="Folders">
        ${folders.map(([icon, text, flag = '']) => `<nav-item icon="${icon}" ${flag}>${text}</nav-item>`).join('')}
      </nav>
      <div class="heading">
        <h3>Labels</h3>
        <button aria-label="Create new label"><ui-icon name="plus" size="14"></ui-icon></button>
      </div>
      <nav aria-label="Labels">
        ${labels.map(([text, flags]) => `<nav-item ${flags}>${text}</nav-item>`).join('')}
      </nav>
    `;
  }
}
customElements.define('mail-sidebar', MailSidebar);

class MailPane extends HTMLElement {
  connectedCallback() {
    this.attachShadow({ mode: 'open' });
    this.shadowRoot.innerHTML = `
      <style>
        ${RESET}
        :host {
          display: flex;
          flex-direction: column;
          flex: 1;
          min-width: 0;
          margin-bottom: 15px;
          border-radius: 14px;
          background: #fff;
          color: #5f6368;
        }
        .tools {
          display: flex;
          align-items: center;
          height: 42px;
          padding-left: 17px;
        }
        .tools input {
          appearance: none;
          width: 14px;
          height: 14px;
          border: 2px solid #5f6368;
          border-radius: 2px;
        }
        .tools .caret { width: 22px; }
        .tools .refresh { width: 34px; margin-left: 8px; }
        .tools .dots { width: 34px; margin-left: 2px; }
        .tabs {
          display: flex;
          gap: 17px;
          height: 51px;
          padding-left: 8px;
          margin-right: 14px;
          border-bottom: 1px solid #eceff1;
        }
        .tabs button {
          width: 211px;
          height: 51px;
          gap: 16px;
          justify-content: flex-start;
          padding-left: 8px;
          border-bottom: 3px solid transparent;
          font-weight: 500;
          color: #444746;
        }
        .tabs button[aria-selected=true] {
          color: #0b57d0;
          border-bottom-color: #0b57d0;
          border-radius: 2px 2px 0 0;
        }
        .empty {
          display: flex;
          justify-content: center;
          padding: 71px 19px 0 0;
        }
        h2 { margin: 0 0 13px; font-size: 15px; font-weight: 400; line-height: 20px; }
        p { margin: 0 0 13px; line-height: 18px; }
        p a { color: #0b57d0; }
        footer {
          display: grid;
          grid-template-columns: 1fr auto 1fr;
          margin-top: auto;
          padding: 0 30px 156px 15px;
          font-size: 11px;
          line-height: 18px;
        }
        .bar {
          width: 198px;
          height: 6px;
          margin: 6px 0;
          border-radius: 3px;
          background: #dadce0;
        }
        .usage { display: flex; align-items: center; gap: 7px; }
        .activity { text-align: right; }
      </style>
      <div class="tools">
        <input type="checkbox" aria-label="Select">
        <button class="caret" aria-label="Select options"><ui-icon name="caret" size="8"></ui-icon></button>
        <button class="refresh" aria-label="Refresh"><ui-icon name="reload" size="13"></ui-icon></button>
        <button class="dots" aria-label="More"><ui-icon name="kebab" size="16"></ui-icon></button>
      </div>
      <div class="tabs" role="tablist">
        <button role="tab" aria-selected="true"><ui-icon name="inbox"></ui-icon>Primary</button>
        <button role="tab"><ui-icon name="tag"></ui-icon>Promotions</button>
        <button role="tab"><ui-icon name="people"></ui-icon>Social</button>
      </div>
      <div class="empty">
        <div>
          <h2>Your Primary tab is empty.</h2>
          <p>Personal messages and messages that don’t appear in other tabs will be shown here.</p>
          <p>To add or remove tabs click <a href="#">inbox settings</a>.</p>
        </div>
      </div>
      <footer>
        <div>
          <div class="bar"></div>
          <div class="usage">0.07 GB of 15 GB used <ui-icon name="openNew"></ui-icon></div>
        </div>
        <div><a href="#">Terms</a> · <a href="#">Privacy</a> · <a href="#">Program Policies</a></div>
        <div class="activity">Last account activity: 21 hours ago<br><a href="#">Details</a></div>
      </footer>
    `;
  }
}
customElements.define('mail-pane', MailPane);

class SideRail extends HTMLElement {
  connectedCallback() {
    this.attachShadow({ mode: 'open' });
    this.shadowRoot.innerHTML = `
      <style>
        ${RESET}
        :host {
          display: flex;
          flex-direction: column;
          align-items: center;
          flex: none;
          width: 50px;
          color: #1f1f1f;
        }
        button { width: 32px; height: 32px; margin: 9px 0; }
        hr { width: 18px; margin: 15px 0; border: 0; border-top: 1px solid #dadce0; }
        .hide { margin-top: auto; }
      </style>
      <button aria-label="Calendar"><ui-icon name="calendar" size="18"></ui-icon></button>
      <button aria-label="Keep"><ui-icon name="keep" size="18"></ui-icon></button>
      <button aria-label="Tasks"><ui-icon name="tasks" size="18"></ui-icon></button>
      <button aria-label="Contacts"><ui-icon name="contacts"></ui-icon></button>
      <hr>
      <button aria-label="Get add-ons"><ui-icon name="plus"></ui-icon></button>
      <button class="hide" aria-label="Hide side panel"><ui-icon name="chevronRight"></ui-icon></button>
    `;
  }
}
customElements.define('side-rail', SideRail);

class MailApp extends HTMLElement {
  connectedCallback() {
    this.attachShadow({ mode: 'open' });
    this.shadowRoot.innerHTML = `
      <style>
        :host {
          display: flex;
          flex-direction: column;
          flex: 1;
          min-height: 0;
          background: #f6f8fc;
        }
        main { display: flex; flex: 1; min-height: 0; }
      </style>
      <mail-header></mail-header>
      <main>
        <mail-sidebar></mail-sidebar>
        <mail-pane></mail-pane>
        <side-rail></side-rail>
      </main>
    `;
  }
}
customElements.define('mail-app', MailApp);

class TaskButton extends HTMLElement {
  connectedCallback() {
    const badge = this.getAttribute('badge');
    this.attachShadow({ mode: 'open' });
    this.shadowRoot.innerHTML = `
      <style>
        ${RESET}
        :host { display: flex; justify-content: center; width: 48px; height: 40px; position: relative; }
        button { width: 40px; border-bottom: 2px solid transparent; padding-top: 2px; }
        :host([running]) button { border-color: #76b9ed; }
        :host([active]) { background: #4b4b4b; }
        :host([alert]) { background: #a75f26; }
        :host([active]) button, :host([alert]) button { width: 48px; }
        :host([alert]) button { border-color: #ff7a0e; }
        .badge {
          position: absolute;
          left: 22px;
          top: 18px;
          width: 16px;
          height: 16px;
          border-radius: 50%;
          background: var(--badge, #5c6bc0);
          color: #fff;
          font: 11px/16px Roboto, sans-serif;
          text-align: center;
        }
      </style>
      <button aria-label="${this.getAttribute('label')}"><ui-icon name="${this.getAttribute('icon')}" size="24"></ui-icon></button>
      ${badge ? `<span class="badge">${badge}</span>` : ''}
    `;
  }
}
customElements.define('task-button', TaskButton);

class DesktopTaskbar extends HTMLElement {
  connectedCallback() {
    this.attachShadow({ mode: 'open' });
    this.shadowRoot.innerHTML = `
      <style>
        ${RESET}
        :host {
          display: flex;
          align-items: center;
          flex: none;
          height: 40px;
          background: linear-gradient(90deg, #1e1e1e, #251d22 42%, #1f1f1f 54%, #1c2129 68%, #1c2127 90%, #1f1f1f);
          color: #fff;
          font-family: "Open Sans", sans-serif;
          font-size: 13px;
        }
        .start { width: 48px; height: 40px; }
        .search {
          display: flex;
          align-items: center;
          width: 288px;
          height: 40px;
          padding-left: 11px;
          border: 1px solid #c2c2c2;
          background: #f2f2f2;
          color: #1f1f1f;
        }
        .search input {
          flex: 1;
          min-width: 0;
          margin-left: 10px;
          padding: 0;
          border: 0;
          outline: 0;
          background: none;
          font-size: 14px;
        }
        .search input::placeholder { color: #2b2b2b; opacity: 1; }
        .apps { display: flex; gap: 1px; margin-left: 3px; }
        .address {
          display: flex;
          align-items: center;
          margin-left: auto;
          font-size: 11px;
          color: #e6e6e6;
        }
        .field {
          display: flex;
          align-items: center;
          width: 230px;
          height: 20px;
          margin-left: 6px;
          background: #fff;
          color: #555;
        }
        .field input { flex: 1; min-width: 0; height: 20px; padding: 0 4px; border: 0; outline: 0; background: none; }
        .field button { width: 17px; height: 20px; }
        .field .go { border-left: 1px solid #ccc; }
        .weather { gap: 8px; margin: 0 20px 0 47px; }
        .tray { width: 24px; height: 40px; }
        .clock { width: 64px; text-align: center; font-size: 11px; line-height: 18px; }
        .notices { position: relative; width: 48px; height: 40px; padding: 0 8px 2px 0; }
        .notices span {
          position: absolute;
          left: 19px;
          top: 19px;
          width: 18px;
          height: 18px;
          border: 1px solid #9aa0a6;
          border-radius: 50%;
          background: #30343a;
          font-size: 10px;
          line-height: 16px;
        }
        .desktop { width: 5px; height: 40px; border-left: 1px solid #6b6b6b; }
      </style>
      <button class="start" aria-label="Start"><ui-icon name="windows"></ui-icon></button>
      <label class="search">
        <ui-icon name="lens" size="18"></ui-icon>
        <input type="text" aria-label="Type here to search" placeholder="Type here to search">
        <ui-icon name="scientist" width="74" size="38"></ui-icon>
      </label>
      <div class="apps">
        <task-button icon="explorer" label="File Explorer" running></task-button>
        <task-button icon="mail" label="Mail"></task-button>
        <task-button icon="store" label="Store"></task-button>
        <task-button icon="office" label="Office"></task-button>
        <task-button icon="control" label="Control Panel"></task-button>
        <task-button icon="calculator" label="Calculator" running></task-button>
        <task-button icon="photoshop" label="Photoshop"></task-button>
        <task-button icon="chrome" label="Chrome"></task-button>
        <task-button icon="edge" label="Edge" running></task-button>
        <task-button icon="capybara" label="Capybara"></task-button>
        <task-button icon="notepad" label="Notepad"></task-button>
        <task-button icon="telegram" label="Telegram" alert badge="2" style="--badge: #f23c34"></task-button>
        <task-button icon="chrome" label="Chrome" running active badge="M"></task-button>
        <task-button icon="chrome" label="Chrome" running badge="M" style="--badge: #689f38"></task-button>
        <task-button icon="zoom" label="Zoom" running></task-button>
      </div>
      <div class="address">
        <label for="addr">Address</label>
        <div class="field">
          <input id="addr" type="text">
          <button aria-label="Previous locations"><ui-icon name="chevronDown" size="14"></ui-icon></button>
          <button class="go" aria-label="Refresh"><ui-icon name="refreshSmall" size="14"></ui-icon></button>
        </div>
      </div>
      <button class="weather"><ui-icon name="weather" size="24"></ui-icon><span>25°C</span><span>Partly sunny</span></button>
      <button class="tray" aria-label="Show hidden icons"><ui-icon name="chevronUp"></ui-icon></button>
      <button class="tray" aria-label="Network"><ui-icon name="network" size="18"></ui-icon></button>
      <button class="tray" aria-label="Volume"><ui-icon name="volume" size="18"></ui-icon></button>
      <div class="clock">7:09 AM<br>12/27/2023</div>
      <button class="notices" aria-label="Notifications"><ui-icon name="note"></ui-icon><span>16</span></button>
      <button class="desktop" aria-label="Show desktop"></button>
    `;
  }
}
customElements.define('desktop-taskbar', DesktopTaskbar);
</script>
</body>
</html>
